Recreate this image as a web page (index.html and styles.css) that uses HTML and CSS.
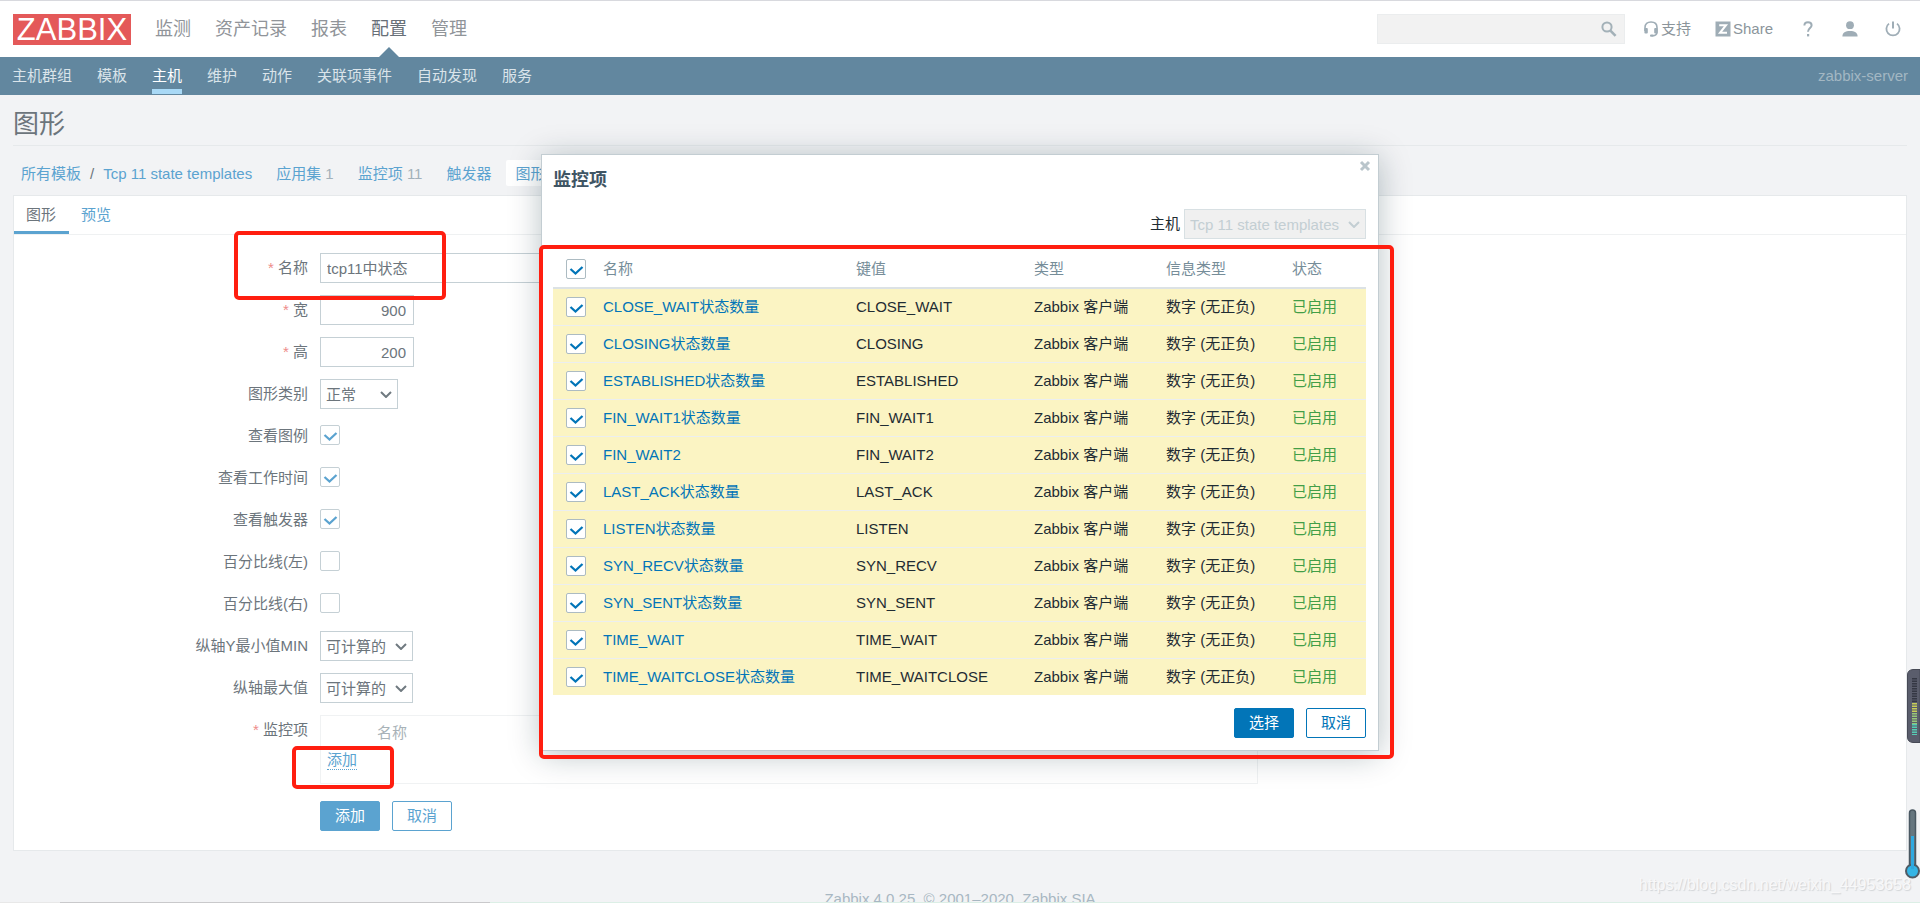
FILE: index.html
```html
<!DOCTYPE html>
<html lang="zh-CN">
<head>
<meta charset="utf-8">
<title>图形</title>
<link rel="stylesheet" href="styles.css">
</head>
<body>
<header class="top">
  <a class="logo" href="#">ZABBIX</a>
  <nav class="main-menu">
    <a href="#">监测</a>
    <a href="#">资产记录</a>
    <a href="#">报表</a>
    <a href="#" class="current">配置</a>
    <a href="#">管理</a>
  </nav>
  <form class="search">
    <input type="text" aria-label="搜索">
    <button type="button" aria-label="搜索">
      <svg width="16" height="16" viewBox="0 0 16 16"><circle cx="6" cy="6" r="4.6" fill="none" stroke="currentColor" stroke-width="2"/><path d="M9.4 9.6 L14.6 14.8" stroke="currentColor" stroke-width="2.6"/></svg>
    </button>
  </form>
  <a class="tool support" href="#">
    <svg width="16" height="16" viewBox="0 0 16 16"><path d="M2 10 V6.5 C2 3 4.5 1 8 1 S14 3 14 6.5 V11 C14 13.5 12.5 14.6 9.5 14.8" fill="none" stroke="currentColor" stroke-width="1.6"/><rect x="1.4" y="7" width="3.4" height="5.4" rx="1" fill="currentColor"/><rect x="11.2" y="7" width="3.4" height="5.4" rx="1" fill="currentColor"/><rect x="7" y="13.6" width="3.6" height="2.2" rx="1" fill="currentColor"/></svg>
    <span>支持</span>
  </a>
  <a class="tool share" href="#">
    <svg width="16" height="16" viewBox="0 0 16 16"><rect width="15" height="15" y="0.5" x="0.5" fill="currentColor"/><path d="M4.2 4.2 H11 L5 11.8 H12" fill="none" stroke="#fff" stroke-width="2"/></svg>
    <span>Share</span>
  </a>
  <a class="tool help" href="#" aria-label="帮助">
    <svg width="16" height="16" viewBox="0 0 16 16"><path d="M4.4 4.6 C4.4 2.2 6 1.2 8 1.2 C10.2 1.2 11.6 2.4 11.6 4.3 C11.6 7 8 7.2 8 10.8" fill="none" stroke="currentColor" stroke-width="2"/><rect x="7" y="13" width="2.2" height="2.4" fill="currentColor"/></svg>
  </a>
  <a class="tool user" href="#" aria-label="用户">
    <svg width="16" height="16" viewBox="0 0 16 16"><circle cx="8" cy="4.2" r="3.9" fill="currentColor"/><path d="M0.4 15.4 C0.4 11.6 3.4 10 8 10 S15.6 11.6 15.6 15.4 Z" fill="currentColor"/></svg>
  </a>
  <a class="tool power" href="#" aria-label="登出">
    <svg width="16" height="16" viewBox="0 0 16 16"><path d="M4 2.6 A6.6 6.6 0 1 0 12 2.6" fill="none" stroke="currentColor" stroke-width="1.8"/><path d="M8 0.4 V7.4" stroke="currentColor" stroke-width="2"/></svg>
  </a>
</header>

<div class="sub">
  <nav class="sub-menu">
    <a href="#">主机群组</a>
    <a href="#">模板</a>
    <a href="#" class="current">主机</a>
    <a href="#">维护</a>
    <a href="#">动作</a>
    <a href="#">关联项事件</a>
    <a href="#">自动发现</a>
    <a href="#">服务</a>
  </nav>
  <span class="server">zabbix-server</span>
</div>

<main class="page">
  <h1>图形</h1>
  <nav class="crumbs">
    <div class="path"><a href="#">所有模板</a><span>/</span><a href="#">Tcp 11 state templates</a></div>
    <div><a href="#">应用集</a> <sup>1</sup></div>
    <div><a href="#">监控项</a> <sup>11</sup></div>
    <div><a href="#">触发器</a></div>
    <div class="selected"><a href="#">图形</a></div>
  </nav>

  <section class="panel">
    <nav class="tabs">
      <a href="#" class="current">图形</a>
      <a href="#">预览</a>
    </nav>
    <form class="form">
      <label class="req" for="f-name">名称</label>
      <div><input class="text wide" id="f-name" type="text" value="tcp11中状态"></div>
      <label class="req" for="f-width">宽</label>
      <div><input class="text num" id="f-width" type="text" value="900"></div>
      <label class="req" for="f-height">高</label>
      <div><input class="text num" id="f-height" type="text" value="200"></div>
      <label for="f-type">图形类别</label>
      <div><select class="select kind" id="f-type"><option>正常</option></select></div>
      <label for="f-legend">查看图例</label>
      <div class="tick"><input class="check" id="f-legend" type="checkbox" checked></div>
      <label for="f-work">查看工作时间</label>
      <div class="tick"><input class="check" id="f-work" type="checkbox" checked></div>
      <label for="f-trig">查看触发器</label>
      <div class="tick"><input class="check" id="f-trig" type="checkbox" checked></div>
      <label for="f-left">百分比线(左)</label>
      <div class="tick"><input class="check" id="f-left" type="checkbox"></div>
      <label for="f-right">百分比线(右)</label>
      <div class="tick"><input class="check" id="f-right" type="checkbox"></div>
      <label for="f-min">纵轴Y最小值MIN</label>
      <div><select class="select axis" id="f-min"><option>可计算的</option></select></div>
      <label for="f-max">纵轴最大值</label>
      <div><select class="select axis" id="f-max"><option>可计算的</option></select></div>
      <span class="label req">监控项</span>
      <div class="items">
        <div class="items-head">名称</div>
        <a href="#">添加</a>
      </div>
      <div class="actions">
        <button class="btn fill" type="button">添加</button>
        <button class="btn" type="button">取消</button>
      </div>
    </form>
  </section>
  <footer>Zabbix 4.0.25. © 2001–2020, Zabbix SIA</footer>
</main>

<div class="overlay">
  <section class="dialog" role="dialog" aria-label="监控项">
    <button class="close" type="button" aria-label="关闭">
      <svg width="12" height="12" viewBox="0 0 12 12"><path d="M2 2 L10 10 M10 2 L2 10" stroke="currentColor" stroke-width="3"/></svg>
    </button>
    <h2>监控项</h2>
    <div class="controls">
      <label for="d-host">主机</label>
      <select class="select host" id="d-host" disabled><option>Tcp 11 state templates</option></select>
    </div>
    <table>
      <thead>
        <tr><th class="c0"><input class="check" type="checkbox" checked aria-label="全选"></th><th class="c1">名称</th><th class="c2">键值</th><th class="c3">类型</th><th class="c4">信息类型</th><th class="c5">状态</th></tr>
      </thead>
      <tbody>
        <tr><td><input class="check" type="checkbox" checked aria-label="CLOSE_WAIT"></td><td><a href="#">CLOSE_WAIT状态数量</a></td><td>CLOSE_WAIT</td><td>Zabbix 客户端</td><td>数字 (无正负)</td><td class="on">已启用</td></tr>
        <tr><td><input class="check" type="checkbox" checked aria-label="CLOSING"></td><td><a href="#">CLOSING状态数量</a></td><td>CLOSING</td><td>Zabbix 客户端</td><td>数字 (无正负)</td><td class="on">已启用</td></tr>
        <tr><td><input class="check" type="checkbox" checked aria-label="ESTABLISHED"></td><td><a href="#">ESTABLISHED状态数量</a></td><td>ESTABLISHED</td><td>Zabbix 客户端</td><td>数字 (无正负)</td><td class="on">已启用</td></tr>
        <tr><td><input class="check" type="checkbox" checked aria-label="FIN_WAIT1"></td><td><a href="#">FIN_WAIT1状态数量</a></td><td>FIN_WAIT1</td><td>Zabbix 客户端</td><td>数字 (无正负)</td><td class="on">已启用</td></tr>
        <tr><td><input class="check" type="checkbox" checked aria-label="FIN_WAIT2"></td><td><a href="#">FIN_WAIT2</a></td><td>FIN_WAIT2</td><td>Zabbix 客户端</td><td>数字 (无正负)</td><td class="on">已启用</td></tr>
        <tr><td><input class="check" type="checkbox" checked aria-label="LAST_ACK"></td><td><a href="#">LAST_ACK状态数量</a></td><td>LAST_ACK</td><td>Zabbix 客户端</td><td>数字 (无正负)</td><td class="on">已启用</td></tr>
        <tr><td><input class="check" type="checkbox" checked aria-label="LISTEN"></td><td><a href="#">LISTEN状态数量</a></td><td>LISTEN</td><td>Zabbix 客户端</td><td>数字 (无正负)</td><td class="on">已启用</td></tr>
        <tr><td><input class="check" type="checkbox" checked aria-label="SYN_RECV"></td><td><a href="#">SYN_RECV状态数量</a></td><td>SYN_RECV</td><td>Zabbix 客户端</td><td>数字 (无正负)</td><td class="on">已启用</td></tr>
        <tr><td><input class="check" type="checkbox" checked aria-label="SYN_SENT"></td><td><a href="#">SYN_SENT状态数量</a></td><td>SYN_SENT</td><td>Zabbix 客户端</td><td>数字 (无正负)</td><td class="on">已启用</td></tr>
        <tr><td><input class="check" type="checkbox" checked aria-label="TIME_WAIT"></td><td><a href="#">TIME_WAIT</a></td><td>TIME_WAIT</td><td>Zabbix 客户端</td><td>数字 (无正负)</td><td class="on">已启用</td></tr>
        <tr><td><input class="check" type="checkbox" checked aria-label="TIME_WAITCLOSE"></td><td><a href="#">TIME_WAITCLOSE状态数量</a></td><td>TIME_WAITCLOSE</td><td>Zabbix 客户端</td><td>数字 (无正负)</td><td class="on">已启用</td></tr>
      </tbody>
    </table>
    <div class="dialog-actions">
      <button class="btn fill" type="button">选择</button>
      <button class="btn" type="button">取消</button>
    </div>
    <div class="mark mark-dialog"></div>
  </section>
</div>

<div class="mark mark-name"></div>
<div class="mark mark-add"></div>

<svg class="meter" width="13" height="74" viewBox="0 0 13 74">
  <path d="M13 0.5 H6 Q0.5 1 0.5 6 V68 Q0.5 73 6 73.5 H13 Z" fill="#5a5d6c" stroke="#474a56"/>
  <path d="M7.5 9 V33" stroke="#353844" stroke-width="5" stroke-dasharray="1.5 1"/>
  <path d="M7.5 34 V44" stroke="#c8cf58" stroke-width="5" stroke-dasharray="1.5 1"/>
  <path d="M7.5 44 V55" stroke="#97c878" stroke-width="5" stroke-dasharray="1.5 1"/>
  <path d="M7.5 55 V66" stroke="#55cdb4" stroke-width="5" stroke-dasharray="1.5 1"/>
</svg>
<svg class="thermo" width="15" height="70" viewBox="0 0 15 70">
  <path d="M4.5 56 V4 Q4.5 1 7.5 1 Q10.5 1 10.5 4 V56" fill="#66767f" stroke="#4a5862" stroke-width="1.5"/>
  <circle cx="7.5" cy="62" r="6.5" fill="#35b5e5" stroke="#4f5b65" stroke-width="2"/>
  <path d="M7.5 27 V60" stroke="#2fa9e0" stroke-width="3"/>
</svg>
<div class="watermark">https://blog.csdn.net/weixin_44953658</div>
<div class="edge"></div>
</body>
</html>
```

FILE: styles.css
```css
* { box-sizing: border-box; }

body {
  margin: 0;
  position: relative;
  height: 100vh;
  overflow: hidden;
  background: #f2f3f5;
  color: #6c757c;
  font: 15px/20px "Liberation Sans", "Noto Sans CJK SC", sans-serif;
}

a { color: #5ba3d0; text-decoration: none; }
button, input, select { font: inherit; color: inherit; margin: 0; }
svg { display: block; flex: none; }

/* Header */
.top {
  display: flex;
  align-items: center;
  height: 57px;
  padding: 0 19px 0 13px;
  background: #fff;
  border-top: 1px solid #d8d9de;
}
.logo {
  width: 118px;
  height: 31px;
  background: #e45959;
  color: #fff;
  font-size: 31px;
  line-height: 32px;
  text-align: center;
}
.main-menu {
  display: flex;
  align-self: stretch;
  gap: 24px;
  margin-left: 24px;
  margin-right: auto;
}
.main-menu a {
  position: relative;
  color: #909499;
  font-size: 18px;
  line-height: 57px;
}
.main-menu .current { color: #687078; }
.main-menu .current::after {
  content: "";
  position: absolute;
  left: 8px;
  bottom: 0;
  border: 10px solid transparent;
  border-top: 0;
  border-bottom-color: #62879f;
}
.search {
  display: flex;
  align-items: center;
  width: 248px;
  height: 30px;
  background: #f2f2f2;
  border: 1px solid #ebedee;
}
.search input {
  flex: 1;
  min-width: 0;
  height: 28px;
  border: 0;
  background: none;
}
.search button {
  padding: 0;
  margin-right: 7px;
  border: 0;
  background: none;
  color: #a3b1b8;
}
.tool {
  display: flex;
  align-items: center;
  gap: 2px;
  color: #9fadb6;
}
.tool span { color: #8b959b; }
.support { margin-left: 18px; }
.share { margin-left: 24px; }
.help { margin-left: 27px; }
.user { margin-left: 26px; }
.power { margin-left: 27px; }

.sub {
  display: flex;
  justify-content: space-between;
  height: 38px;
  padding: 0 12px;
  background: #62879f;
  line-height: 38px;
}
.sub-menu { display: flex; gap: 25px; }
.sub-menu a { color: #dae4ea; height: 37px; }
.sub-menu .current { color: #fff; border-bottom: 5px solid #a9d9f6; }
.server { color: #a3b7c3; }

/* Page */
.page { padding: 0 13px; }
h1 {
  margin: 0;
  padding: 9px 0 1px;
  height: 51px;
  border-bottom: 1px solid #e6e9eb;
  font-size: 26px;
  font-weight: 400;
  line-height: 40px;
}
.crumbs {
  display: flex;
  gap: 6px;
  padding: 14px 0 9px;
  white-space: pre;
}
.crumbs div {
  height: 26px;
  padding: 0 9px;
  line-height: 28px;
}
.crumbs .path { display: flex; gap: 9px; padding-left: 8px; }
.crumbs sup { font-size: 15px; vertical-align: baseline; line-height: 1; color: #a3b1ba; }
.crumbs .selected { background: #fff; border-radius: 2px; }

.panel { background: #fff; border: 1px solid #e6e9eb; }
.tabs {
  display: flex;
  height: 39px;
  border-bottom: 1px solid #eff1f2;
  line-height: 37px;
}
.tabs a { padding: 0 12px; height: 38px; }
.tabs .current { padding: 0 13px 0 12px; color: #6c757c; border-bottom: 3px solid #5ba3d0; }

.form {
  display: grid;
  grid-template-columns: 294px 1fr;
  column-gap: 12px;
  row-gap: 12px;
  padding: 18px 0 19px;
  line-height: 30px;
}
.form label, .form .label { text-align: right; height: 30px; }
.form > div { display: flex; align-items: center; }
.form > .tick { align-items: flex-start; padding-top: 4px; }
.req::before { content: "* "; color: #ee8b89; }

.text {
  height: 30px;
  padding: 1px 6px 0;
  border: 1px solid #c5d0d5;
  background: #fff;
}
.wide { width: 566px; }
.num { width: 94px; text-align: right; padding-right: 7px; }
.select {
  appearance: none;
  height: 30px;
  padding: 0 5px;
  border: 1px solid #c5d0d5;
  border-radius: 0;
  background: #fff url("data:image/svg+xml,%3Csvg xmlns='http://www.w3.org/2000/svg' width='12' height='8'%3E%3Cpath d='M1 2 L6 7 L11 2' fill='none' stroke='%23707a80' stroke-width='2'/%3E%3C/svg%3E") no-repeat right 5px center;
}
.kind { width: 78px; }
.axis { width: 93px; }
.check {
  appearance: none;
  display: block;
  width: 20px;
  height: 20px;
  border: 1px solid #c5d0d5;
  border-radius: 2px;
  background: #fff center no-repeat;
}
.check:checked {
  background-image: url("data:image/svg+xml,%3Csvg xmlns='http://www.w3.org/2000/svg' width='18' height='18'%3E%3Cpath d='M3.5 9 L8.5 13.5 L15.5 7' fill='none' stroke='%235ba3d0' stroke-width='2.3'/%3E%3C/svg%3E");
}

.form .items {
  display: block;
  max-width: 938px;
  height: 69px;
  padding: 2px 6px;
  border: 1px solid #f0f2f3;
}
.items-head { padding-left: 50px; color: #a8b2b8; }
.items a { display: block; width: 30px; line-height: 24px; height: 22px; border-bottom: 1px dotted #5ba3d0; }
.actions { grid-column: 2; gap: 12px; padding-top: 5px; }

.btn {
  min-width: 60px;
  height: 30px;
  padding: 0 14px;
  border: 1px solid #5ba3d0;
  border-radius: 2px;
  background: #fff;
  color: #5ba3d0;
  line-height: 28px;
}
.btn.fill { background: #5ba3d0; color: #fff; }

footer { padding-top: 38px; text-align: center; color: #a8b7c2; }

/* Dialog */
.overlay {
  position: absolute;
  inset: 0;
  display: flex;
  justify-content: center;
  align-items: flex-start;
  padding-top: 154px;
}
.dialog {
  position: relative;
  width: 838px;
  padding: 10px 12px 12px 11px;
  border: 1px solid #c3cdd2;
  background: #fff;
  box-shadow: 0 4px 30px rgba(0, 39, 51, .28);
  color: #1f2c33;
}
.close {
  position: absolute;
  top: 5px;
  right: 7px;
  padding: 0;
  border: 0;
  background: none;
  color: #b9c5cb;
}
h2 {
  margin: 0 0 14px;
  color: #3f5564;
  font-size: 18px;
  line-height: 30px;
}
.controls { display: flex; justify-content: flex-end; gap: 4px; line-height: 30px; }
.host {
  width: 182px;
  border-color: #d8e0e3;
  background-color: #f0f0f0;
  background-image: url("data:image/svg+xml,%3Csvg xmlns='http://www.w3.org/2000/svg' width='12' height='8'%3E%3Cpath d='M1 2 L6 7 L11 2' fill='none' stroke='%23c3ced3' stroke-width='2'/%3E%3C/svg%3E");
  color: #c3ced3;
  opacity: 1;
}
table {
  width: 100%;
  margin: 12px 0;
  table-layout: fixed;
  border-collapse: separate;
  border-spacing: 0;
}
th, td { padding: 0 6px; text-align: left; }
th {
  height: 38px;
  border-bottom: 2px solid #dce2e5;
  color: #768d99;
  font-weight: 400;
}
td { height: 37px; background: #fbf4c3; border-bottom: 1px solid #ebeef0; }
tbody tr:last-child td { height: 36px; border-bottom: 0; }
th:first-child, td:first-child { padding: 0 0 1px 13px; }
.c0 { width: 44px; }
.c1 { width: 253px; }
.c2 { width: 178px; }
.c3 { width: 132px; }
.c4 { width: 126px; }
.dialog a { color: #0275b8; }
.dialog .on { color: #429e47; }
.dialog .check { border-color: #acbbc2; }
.dialog .check:checked {
  background-image: url("data:image/svg+xml,%3Csvg xmlns='http://www.w3.org/2000/svg' width='18' height='18'%3E%3Cpath d='M3.5 9 L8.5 13.5 L15.5 7' fill='none' stroke='%230275b8' stroke-width='2.3'/%3E%3C/svg%3E");
}
.dialog-actions { display: flex; justify-content: flex-end; gap: 12px; padding-top: 1px; }
.dialog .btn { border-color: #0275b8; color: #0275b8; }
.dialog .btn.fill { background: #0275b8; color: #fff; }

/* Red annotation frames */
.mark {
  position: absolute;
  border: 4px solid #ff1e10;
  border-radius: 5px;
  pointer-events: none;
}
.mark-name { left: 234px; top: 231px; width: 212px; height: 69px; }
.mark-add { left: 292px; top: 746px; width: 102px; height: 43px; }
.mark-dialog { left: -3px; right: -16px; top: 90px; bottom: -9px; }

/* Desktop gadgets on the window edge */
.meter { position: absolute; right: 0; top: 669px; }
.thermo { position: absolute; right: 0; top: 809px; }
.watermark {
  position: absolute;
  right: 9px;
  bottom: 8px;
  color: #f8f8f9;
  font-size: 16px;
  text-shadow: 1px 1px 1px #d0d3d6;
}
.edge {
  position: absolute;
  left: 0;
  right: 0;
  bottom: 0;
  height: 1px;
  background: linear-gradient(90deg, #e8e8e8 60px, #c9c9cb 60px, #c9c9cb 490px, #dcefe6 490px);
}
```
